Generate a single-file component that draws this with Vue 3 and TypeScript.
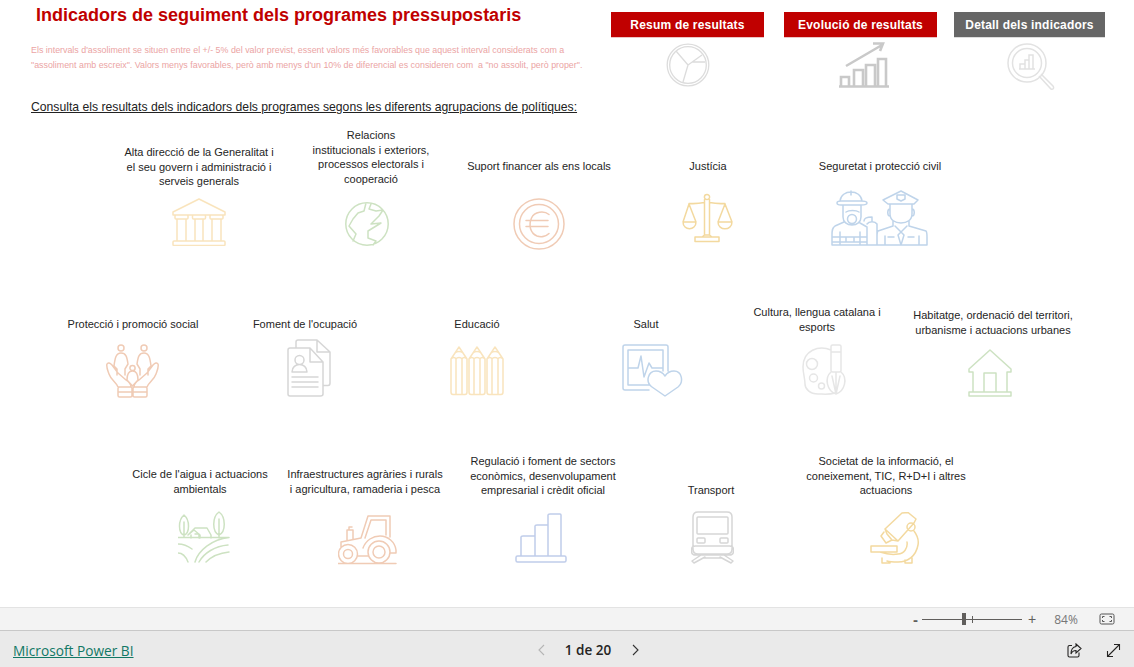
<script setup lang="ts">
interface Tile {
  lines: string[];
  cx: number; // label centre on the canvas
  top: number; // label top
  ix: number; // icon left
  iy: number; // icon top
  w: number;
  h: number;
  tone: string;
  d: string;
}

// circle as a path so each icon stays a single d string
const c = (x: number, y: number, r: number) =>
  `M${x - r} ${y}a${r} ${r} 0 1 0 ${r * 2} 0a${r} ${r} 0 1 0 ${-r * 2} 0`;
const rr = (x: number, y: number, w: number, h: number, r = 1.5) =>
  `M${x + r} ${y}h${w - 2 * r}q${r} 0 ${r} ${r}v${h - 2 * r}q0 ${r} ${-r} ${r}h${2 * r - w}q${-r} 0 ${-r} ${-r}v${2 * r - h}q0 ${-r} ${r} ${-r}z`;

const bank =
  'M27 1L53 14V17H1V14Z' +
  rr(3, 17, 13, 4, 1) + rr(20.5, 17, 13, 4, 1) + rr(38, 17, 13, 4, 1) +
  'M5 21V43M14 21V43M23 21V43M31 21V43M40 21V43M49 21V43' +
  rr(1, 43, 52, 4.5, 1);
const globe =
  c(22, 22, 21.2) +
  'M21 1L19 9L13 11L8 17L4 24L11 32L8 39' +
  'M26 2L24 7L31 9L38 8L34 14L26 22L36 21L23 29L23 36L31 39L28 43';
const euro =
  c(26, 26, 25) + c(26, 26, 19.5) +
  'M36 16.5C31 12.5 21.5 13.5 18.5 20C15.5 27 17 35 24 38C28 39.5 33 38.5 36 35.5M13 22.5H35M13 28.5H35';
const scales =
  c(25, 4, 2.6) + 'M22.5 6.5V42M27.5 6.5V42M20 44L22.5 42H27.5L30 44M13 44H37V48.5H13Z' +
  'M7 10.5C15 11 20 10 22.5 9.5M27.5 9.5C30 10 35 11 43 10.5M7 11L1 29M7 11L14 29M43 11L36 29M43 11L50 29' +
  'M1 29H14C14 38 1 38 1 29ZM36 29H50C50 38 36 38 36 29Z';
const responders =
  // firefighter
  'M9 11C10 -1 30 -1 31 11M6 13C6 11 8 11 10 11H30C33 11 36 11 36 13C36 15 33 15 30 15H10C8 15 6 15 6 13Z' +
  'M20 1V5M12 15V27C12 32 16 35 21 35C26 35 30 32 30 27V15' +
  c(21, 29, 4.5) + 'M15 22C18 20 25 20 28 22' +
  'M13 32L4 36C1 38 1 41 1 45V55H36V37L29 33M9 42V55M29 42V55M1 47H36V52H1M15 47V52M23 47V52' +
  'M33 31C33 28 37 27 41 27M36 34C38 31 44 31 46 34V55H36M41 27V31' +
  // officer
  'M52 10L70 1L87 10L83 14H57ZM66 5H74V9L70 11L66 9Z' +
  'M59 14V24C59 30 64 33 70 33C76 33 81 30 81 24V14M59 19C56 19 56 26 59 26M81 19C84 19 84 26 81 26' +
  'M62 31V36L47 41C46 42 46 44 46 47V55H96V47C96 44 96 42 95 41L78 36V31M64 36L70 42L76 36M70 42L67 45L70 55L73 45Z' +
  'M54 46V55M88 46V55M57 47H63M77 47H83';
const family =
  c(15, 4, 3) + c(38, 4, 3) +
  'M15 9C10 9 9 14 8 22L11 25V31M15 9C20 9 21 13 22 20L19 25V31M38 9C33 9 32 13 31 20L34 25V31M38 9C43 9 44 14 45 22L42 25V31' +
  c(26.5, 24, 2.6) + 'M26.5 27C22.5 27 21 31 21 36L26.5 42L32 36C32 31 30.500 27 26.500 27Z' +
  'M1 20C2 18 4 19 6 21L12 29L20 36C23 38 25 40 25 43H12C10 38 5 36 3 30C2 27 0 23 1 20Z' +
  'M52 20C51 18 49 19 47 21L41 29L33 36C30 38 28 40 28 43H41C43 38 48 36 50 30C51 27 53 23 52 20Z' +
  rr(12, 43, 14, 10) + rr(27, 43, 14, 10) + 'M12 48H41';
const documents =
  'M9 9V3C9 1.500 10 1 11 1H30L43 13V44C43 45.500 42 46.500 41 46.500H36M30 1V13H43' +
  'M3 9H23L36 23V55C36 56 35 57 33.500 57H3C1.500 57 1 56 1 55V11C1 10 2 9 3 9ZM23 9V23H36' +
  c(12.5, 21, 4.5) + 'M5 33C5 23 20 23 20 33ZM5 38H31M5 43H31M5 48H31';
const pencils =
  'M1 13L9 1L17 13V46C17 47.500 16 48.500 15 48.500H3C2 48.500 1 47.500 1 46ZM5 7C7 5 11 5 13 7M1 13C3 11 5 11 6 13C7 11 11 11 12 13C13 11 15 11 17 13M6 13V48M12 13V48' +
  'M19 13L27 1L35 13V46C35 47.500 34 48.500 33 48.500H21C20 48.500 19 47.500 19 46ZM23 7C25 5 29 5 31 7M19 13C21 11 23 11 24 13C25 11 29 11 30 13C31 11 33 11 35 13M24 13V48M30 13V48' +
  'M37 13L45 1L53 13V46C53 47.500 52 48.500 51 48.500H39C38 48.500 37 47.500 37 46ZM41 7C43 5 47 5 49 7M37 13C39 11 41 11 42 13C43 11 47 11 48 13C49 11 51 11 53 13M42 13V48M48 13V48';
const health =
  'M27 46H3C2 46 1 45 1 44V3C1 2 2 1 3 1H44C45 1 46 2 46 3V27' +
  'M27 41H6V6H41V27M6 24H16L19 12L22 33L27 19L30 24H41' +
  'M43 52L30 43C23 38 26 27 34 27C38 27 41 29 43 32C45 29 48 27 52 27C60 27 62 38 56 43Z';
const palette =
  'M29 6C17 1 1 6 1 23C1 30 3 34 3 40C3 45 8 50 16 50C21 50 27 51 33 49' +
  c(10, 20, 5.5) + c(11.500, 34, 4) + c(19.500, 42, 3) +
  rr(29, 1, 10, 27) + 'M29 8H39M29 28C22 34 25 47 34 50C43 47 46 34 39 28M34 28V50M30 32L34 50M38 32L34 50';
const house =
  'M22 1L1 20V23H5V43H39V23H43V20ZM16 24V43M28 24V43M16 24H28M1 43H43V47H1Z';
const farm =
  'M6 4C0 9 0 22 6 24C12 22 12 9 6 4ZM6 11V26' +
  'M41 1C34 6 34 21 41 24C48 21 48 6 41 1ZM41 8V27' +
  'M10 24L17 17H29L33 24V27M10 24L16 19L22 24V27M13 24V27M17 23H21V27' +
  'M0 26.500H51M0 33C6 33 10 35 14 38M0 42C5 42 8 46 10 51M17 51C20 40 34 28 51 26.500M21 51C26 42 37 35 50 34M28 51C33 46 41 42 51 41';
const tractor =
  c(10, 39, 9.500) + c(10, 39, 4.500) + c(41, 37, 11) + c(41, 37, 6) +
  'M3 32V27L23 23M9 25V15H15V24M11 15V12H14M23 23L30 1H52V22M27 23L33 5H48V20' +
  'M25 33C28 25 35 21 42 21C50 21 57 27 58 35V38H53M20 41H30M0 48.500H58';
const bars =
  rr(1, 43, 50, 6) + 'M6 43V24C6 23 7 23 8 23H20V43M20 43V13C20 12 21 12 22 12H33V43M33 43V2C33 1 34 1 35 1H45C46 1 46 2 46 2V43';
const train =
  rr(2, 1, 39, 42, 5) + rr(6, 6, 31, 17, 1) + rr(6, 27, 8, 5, 1) + rr(29, 27, 8, 5, 1) +
  rr(0.500, 35, 42, 9, 4) + 'M10 44L1 50L3 52L14 46M33 44L42 50L40 52L29 46M12 47H31';
const microscope =
  'M15 17L32 1L38 0.500L46 7L44 11L28 29ZM15 17L17 22M17 22L22 28L28 29M14 20L11 24L16 31L22 28' +
  c(41, 15, 4) + 'M44 19C47 23 49 28 48 33C46 44 38 50 28 50C24 50 20 50 17 49' +
  'M1 34H27V40H1ZM37 30C38 36 34 42 28 42C22 43 16 42 10 40M12 46V51H20V50M35 48V51H42V46';

const rows: { top: number; height: number; tiles: Tile[] }[] = [
  {
    top: 128,
    height: 122,
    tiles: [
      { lines: ['Alta direcció de la Generalitat i', 'el seu govern i administració i', 'serveis generals'], cx: 199, top: 145, ix: 172, iy: 199, w: 54, h: 48, tone: 'amber', d: bank },
      { lines: ['Relacions', 'institucionals i exteriors,', 'processos electorals i', 'cooperació'], cx: 371, top: 128, ix: 345, iy: 203, w: 44, h: 44, tone: 'green', d: globe },
      { lines: ['Suport financer als ens locals'], cx: 539, top: 159, ix: 513, iy: 199, w: 52, h: 52, tone: 'peach', d: euro },
      { lines: ['Justícia'], cx: 708, top: 159, ix: 682, iy: 194, w: 51, h: 50, tone: 'gold', d: scales },
      { lines: ['Seguretat i protecció civil'], cx: 880, top: 159, ix: 831, iy: 191, w: 97, h: 56, tone: 'blue', d: responders },
    ],
  },
  {
    top: 300,
    height: 105,
    tiles: [
      { lines: ['Protecció i promoció social'], cx: 133, top: 317, ix: 106, iy: 345, w: 54, h: 54, tone: 'peach', d: family },
      { lines: ["Foment de l'ocupació"], cx: 305, top: 317, ix: 287, iy: 340, w: 44, h: 58, tone: 'grey', d: documents },
      { lines: ['Educació'], cx: 477, top: 317, ix: 450, iy: 347, w: 54, h: 50, tone: 'amber', d: pencils },
      { lines: ['Salut'], cx: 646, top: 317, ix: 622, iy: 345, w: 61, h: 53, tone: 'blue', d: health },
      { lines: ['Cultura, llengua catalana i', 'esports'], cx: 817, top: 305, ix: 802, iy: 345, w: 47, h: 52, tone: 'pale', d: palette },
      { lines: ['Habitatge, ordenació del territori,', 'urbanisme i actuacions urbanes'], cx: 993, top: 308, ix: 968, iy: 350, w: 44, h: 48, tone: 'green', d: house },
    ],
  },
  {
    top: 450,
    height: 120,
    tiles: [
      { lines: ["Cicle de l'aigua i actuacions", 'ambientals'], cx: 200, top: 467, ix: 178, iy: 512, w: 52, h: 53, tone: 'green', d: farm },
      { lines: ['Infraestructures agràries i rurals', 'i agricultura, ramaderia i pesca'], cx: 365, top: 467, ix: 338, iy: 516, w: 59, h: 50, tone: 'peach', d: tractor },
      { lines: ['Regulació i foment de sectors', 'econòmics, desenvolupament', 'empresarial i crèdit oficial'], cx: 543, top: 454, ix: 515, iy: 514, w: 52, h: 50, tone: 'periwinkle', d: bars },
      { lines: ['Transport'], cx: 711, top: 483, ix: 691, iy: 512, w: 43, h: 53, tone: 'grey', d: train },
      { lines: ['Societat de la informació, el', 'coneixement, TIC, R+D+I i altres', 'actuacions'], cx: 886, top: 454, ix: 870, iy: 513, w: 52, h: 53, tone: 'gold', d: microscope },
    ],
  },
];

const labelWidth = 190;

// each tile is a flow box wide enough for label and icon; margins come from canvas coordinates
function placed(row: { top: number; height: number; tiles: Tile[] }) {
  let right = 0;
  return row.tiles.map((t) => {
    const left = t.cx - labelWidth / 2;
    const slide = Math.min(left, t.ix);
    const out = {
      ...t,
      tileStyle: { marginLeft: `${slide - right}px`, marginRight: `${-labelWidth}px` },
      labelStyle: { marginLeft: `${left - slide}px`, marginTop: `${t.top - row.top}px`, height: `${t.iy - t.top}px` },
      iconStyle: { marginLeft: `${t.ix - slide}px` },
    };
    right = slide;
    return out;
  });
}

const nav = [
  { label: 'Resum de resultats', tone: 'red' },
  { label: 'Evolució de resultats', tone: 'red' },
  { label: 'Detall dels indicadors', tone: 'dark' },
];
</script>

<template>
  <div class="report">
    <main class="canvas">
      <header class="head">
        <div class="intro">
          <h1 class="title">Indicadors de seguiment dels programes pressupostaris</h1>
          <p class="note">
            Els intervals d'assoliment se situen entre el +/- 5% del valor previst, essent valors més favorables que aquest interval considerats com a<br />
            "assoliment amb escreix". Valors menys favorables, però amb menys d'un 10% de diferencial es consideren com&nbsp; a "no assolit, però proper".
          </p>
        </div>
        <nav class="nav">
          <div v-for="(item, i) in nav" :key="item.label" class="nav-item">
            <button type="button" class="nav-btn" :class="item.tone">{{ item.label }}</button>
            <svg v-if="i === 0" class="nav-icon" width="44" height="44" viewBox="0 0 44 44">
              <circle cx="22" cy="22" r="20.800" /><circle cx="22" cy="22" r="18.300" />
              <path d="M22 22L10 8M22 22L36 12M26 19L39 19M22 22L17 39" />
            </svg>
            <svg v-else-if="i === 1" class="nav-icon trend" width="52" height="46" viewBox="0 0 52 46">
              <path d="M7 24L43 3M34 1.500H44L41 9" />
              <path d="M0 44.500H50M2 44V35H10V44M15 44V28H24V44M27 44V23H36V44M39 44V17H47V44" />
            </svg>
            <svg v-else class="nav-icon lens" width="48" height="48" viewBox="0 0 48 48">
              <circle cx="20" cy="20" r="19" /><circle cx="20" cy="20" r="14.500" />
              <path d="M32 33L44 46C47 47 47 44 46 43L34 31M12 26H28M13 26V21H18V26M18 26V17H22V26M22 26V12H26V26" />
            </svg>
          </div>
        </nav>
      </header>

      <p class="consult">Consulta els resultats dels indicadors dels programes segons les diferents agrupacions de polítiques:</p>

      <section
        v-for="row in rows"
        :key="row.top"
        class="row"
        :class="`row-${rows.indexOf(row)}`"
      >
        <article v-for="tile in placed(row)" :key="tile.lines[0]" class="tile" :style="tile.tileStyle">
          <div class="label" :style="tile.labelStyle">
            <span v-for="line in tile.lines" :key="line">{{ line }}</span>
          </div>
          <svg
            class="icon"
            :class="tile.tone"
            :style="tile.iconStyle"
            :width="tile.w"
            :height="tile.h"
            :viewBox="`0 0 ${tile.w} ${tile.h}`"
          >
            <path :d="tile.d" />
          </svg>
        </article>
      </section>
    </main>

    <div class="zoombar">
      <span class="zoom-minus">-</span>
      <div class="slider"><i class="thumb"></i><i class="tick"></i></div>
      <span class="zoom-plus">+</span>
      <span class="zoom-value">84%</span>
      <svg class="fit" width="16" height="12" viewBox="0 0 16 12">
        <rect x="1" y="1" width="14" height="10" rx="1.500" />
        <path d="M3.500 5V3.500H5.500M10.500 3.500H12.500V5M12.500 7V8.500H10.500M5.500 8.500H3.500V7" />
      </svg>
    </div>

    <footer class="footer">
      <a class="brand" href="#">Microsoft Power BI</a>
      <div class="pager">
        <svg class="chev off" width="9" height="12" viewBox="0 0 9 12"><path d="M7 1L2 6L7 11" /></svg>
        <span class="pages">1 de 20</span>
        <svg class="chev" width="9" height="12" viewBox="0 0 9 12"><path d="M2 1L7 6L2 11" /></svg>
      </div>
      <div class="foot-actions">
        <svg width="15" height="15" viewBox="0 0 15 15">
          <path d="M5 2.500H2.500C1.500 2.500 1 3 1 4V12.500C1 13.500 1.500 14 2.500 14H10.500C11.500 14 12 13.500 12 12.500V9.500" />
          <path d="M9 1L14 5.500L9 10V7.500C6.500 7.500 5 8.500 4 11C4 7 6 4 9 3.500Z" />
        </svg>
        <svg width="15" height="15" viewBox="0 0 15 15">
          <path d="M1.500 13.500L13.500 1.500M8 1.500H13.500V7M1.500 8V13.500H7" />
        </svg>
      </div>
    </footer>
  </div>
</template>

<style scoped>
.report {
  display: flex;
  flex-direction: column;
  width: 1134px;
  height: 667px;
  overflow: hidden;
  background: #fff;
  font-family: "Liberation Sans", Arial, sans-serif;
}

.canvas {
  flex: 1;
  min-height: 0;
}

.head {
  display: flex;
  justify-content: space-between;
  height: 96px;
  padding: 0 29px 0 31px;
}

.title {
  margin: 5px 0 0 5px;
  font-size: 18px;
  line-height: 20px;
  font-weight: 700;
  color: #c00000;
}

.note {
  margin: 18px 0 0;
  font-size: 8.870px;
  line-height: 14.500px;
  color: #eba4a4;
}

.nav {
  display: flex;
  gap: 17px;
  padding-top: 12px;
}

.nav-item {
  display: flex;
  flex-direction: column;
  align-items: center;
}

.nav-item:first-child {
  margin-right: 3px;
}

.nav-btn {
  width: 153px;
  height: 25px;
  padding: 0;
  border: 0;
  box-shadow: 0 1px 0 #eec4c4;
  font: 700 12px "Liberation Sans", Arial, sans-serif;
  letter-spacing: 0.200px;
  color: #fff;
}

.nav-btn.red {
  background: #c00000;
}

.nav-btn.dark {
  width: 151px;
  background: #666;
  box-shadow: 0 1px 0 #ddd;
}

.nav-icon {
  margin-top: 6px;
  fill: none;
  stroke: #dcdcdc;
  stroke-width: 1.300;
}

.nav-icon.trend {
  margin-top: 5px;
  margin-left: 8px;
  stroke: #c9c9c9;
  stroke-width: 2.600;
}

.nav-icon.lens {
  margin-left: 3px;
  stroke: #e2e2e2;
  stroke-width: 1.500;
}

.consult {
  margin: 4px 0 0 31px;
  font-size: 12.200px;
  line-height: 14px;
  color: #222;
  text-decoration: underline;
}

.row {
  display: flex;
}

.row-0 {
  height: 122px;
  margin-top: 13px;
}

.row-1 {
  height: 105px;
  margin-top: 50px;
}

.row-2 {
  height: 120px;
  margin-top: 45px;
}

.tile {
  display: flex;
  flex: none;
  flex-direction: column;
  align-items: flex-start;
  width: 190px;
}

.label {
  display: flex;
  flex: none;
  flex-direction: column;
  align-items: center;
  box-sizing: border-box;
  width: 190px;
  padding-top: 1px;
  font-size: 11px;
  line-height: 14.500px;
  color: #252525;
}

.label span {
  white-space: nowrap;
}

.icon {
  display: block;
  flex: none;
  fill: none;
  stroke-width: 1.500;
  stroke-linejoin: round;
  stroke-linecap: round;
}

.amber {
  stroke: #f9e4bd;
}

.green {
  stroke: #cde2c2;
}

.peach {
  stroke: #f0cbb5;
}

.gold {
  stroke: #f3d99f;
}

.blue {
  stroke: #bfd4ea;
}

.periwinkle {
  stroke: #c0cdea;
}

.grey {
  stroke: #d6d6d6;
}

.pale {
  stroke: #e6e6e6;
}

.zoombar {
  display: flex;
  flex: none;
  align-items: center;
  height: 22px;
  padding-left: 913px;
  border-top: 1px solid #e3e3e3;
  border-bottom: 1px solid #c8c8c8;
  background: #f3f3f3;
  color: #605e5c;
}

.zoom-minus {
  width: 9px;
  font-size: 15px;
  font-weight: 700;
}

.slider {
  position: relative;
  width: 100px;
  height: 1px;
  background: #605e5c;
}

.thumb {
  position: absolute;
  left: 40px;
  top: -6px;
  width: 4px;
  height: 12px;
  background: #605e5c;
}

.tick {
  position: absolute;
  left: 50px;
  top: -3px;
  width: 1px;
  height: 7px;
  background: #605e5c;
}

.zoom-plus {
  margin-left: 6px;
  font-size: 14px;
}

.zoom-value {
  margin-left: 18px;
  font-family: "Open Sans", sans-serif;
  font-size: 12px;
  color: #777;
}

.fit {
  margin-left: 21px;
  fill: none;
  stroke: #555;
}

.footer {
  position: relative;
  display: flex;
  flex: none;
  align-items: center;
  box-sizing: border-box;
  height: 36px;
  padding: 2px 13px 0;
  background: #eaeaea;
}

.brand {
  font-family: "Open Sans", sans-serif;
  font-size: 13.700px;
  color: #117865;
}

.pager {
  display: flex;
  align-items: center;
  margin-left: 403px;
}

.pages {
  width: 85px;
  text-align: center;
  font-family: "Open Sans", sans-serif;
  font-size: 13.500px;
  font-weight: 600;
  color: #252423;
}

.chev {
  fill: none;
  stroke: #333;
  stroke-width: 1.100;
}

.chev.off {
  stroke: #b5b5b5;
}

.foot-actions {
  display: flex;
  gap: 24px;
  margin-left: auto;
}

.foot-actions svg {
  fill: none;
  stroke: #252423;
  stroke-width: 1.100;
}
</style>
